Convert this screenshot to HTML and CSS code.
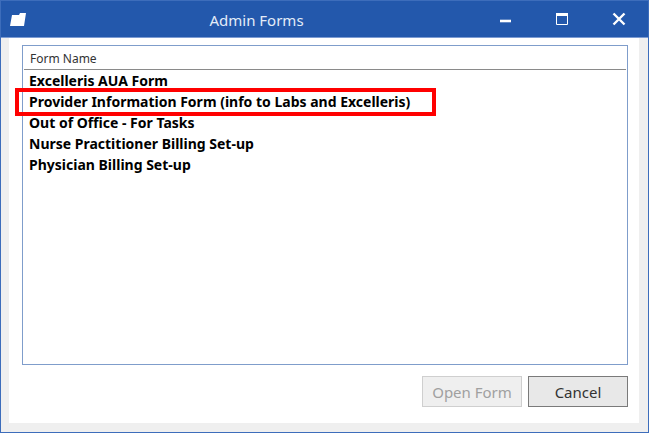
FILE: index.html
```html
<!DOCTYPE html>
<html lang="en">
<head>
  <meta charset="UTF-8" />
  <meta name="viewport" content="width=device-width, initial-scale=1.0" />
  <title>Admin Forms</title>
  <link rel="stylesheet" href="styles.css">
</head>
<body>
  <div class="window">
    <header class="titlebar">
      <svg class="app-icon" viewBox="0 0 18 16" aria-hidden="true">
        <path d="M3 3H10L11 1H17L15 14H1Z"/>
      </svg>
      <h1>Admin Forms</h1>
      <div class="window-controls">
        <button type="button" aria-label="Minimize">
          <svg viewBox="0 0 14 14"><path d="M1 9H12" stroke-width="2.6"/></svg>
        </button>
        <button type="button" aria-label="Maximize">
          <svg viewBox="0 0 14 14"><path d="M1.5 1V12.5H12.5V1" stroke-width="1"/><path d="M1 2.5H13" stroke-width="3"/></svg>
        </button>
        <button type="button" aria-label="Close">
          <svg viewBox="0 0 14 14"><path d="M1.5 1.5L12.5 12.5M12.5 1.5L1.5 12.5" stroke-width="2.4"/></svg>
        </button>
      </div>
    </header>

    <main class="content">
      <div class="form-list">
        <table>
          <thead>
            <tr><th scope="col">Form Name</th></tr>
          </thead>
          <tbody>
            <tr><td>Excelleris AUA Form</td></tr>
            <tr><td><span class="highlighted">Provider Information Form (info to Labs and Excelleris)</span></td></tr>
            <tr><td>Out of Office - For Tasks</td></tr>
            <tr><td>Nurse Practitioner Billing Set-up</td></tr>
            <tr><td>Physician Billing Set-up</td></tr>
          </tbody>
        </table>
      </div>
      <div class="actions">
        <button type="button" class="button" disabled>Open Form</button>
        <button type="button" class="button">Cancel</button>
      </div>
    </main>
  </div>
</body>
</html>
```
FILE: styles.css
```css
:root {
  --blue: #2358ac;
  --frame: #efefef;
  --list-border: #7f9dcb;
  --highlight: #ff0000;
}

* { box-sizing: border-box; margin: 0; padding: 0; }

body {
  background: #fff;
  color: #000;
  font-family: "Noto Sans", "Open Sans", sans-serif;
}

.window {
  display: flex;
  flex-direction: column;
  min-height: 100vh;
  background: var(--frame);
  border: 1px solid #3d6dbb;
}

/* Title bar */
.titlebar {
  display: grid;
  grid-template-columns: 168px 1fr 170px;
  align-items: center;
  height: 37px;
  background: var(--blue);
  border-bottom: 1px solid #7c9bd2;
  color: #fff;
}

.app-icon {
  width: 18px;
  height: 16px;
  margin-left: 8px;
  margin-top: 2px;
  fill: #fff;
}

h1 {
  padding-right: 134px;
  padding-top: 2px;
  font-size: 15px;
  font-weight: 400;
  text-align: center;
  white-space: nowrap;
  color: #e4ecf8;
}

.window-controls {
  display: flex;
  padding-right: 1px;
}

.window-controls button {
  flex: 1;
  height: 36px;
  background: none;
  border: none;
}

.window-controls svg {
  display: block;
  width: 14px;
  height: 14px;
  margin: 0 auto;
  fill: none;
  stroke: #fff;
}

/* Form list */
.content {
  flex: 1;
  display: flex;
  flex-direction: column;
  gap: 11px;
  margin: 0 9px 9px 8px;
  padding: 7px 11px 16px 13px;
  background: #fff;
}

.form-list {
  flex: 1;
  padding: 1px;
  border: 1px solid var(--list-border);
}

table {
  width: 100%;
  border-collapse: collapse;
}

th {
  height: 22px;
  padding: 2px 6px 0;
  border-bottom: 1px solid #8a8a8a;
  font-size: 12px;
  line-height: 16px;
  font-weight: 400;
  text-align: left;
  color: #333;
}

td {
  height: 21px;
  padding: 1px 4px 0 5px;
  font-size: 14px;
  line-height: 20px;
  font-weight: 700;
  white-space: nowrap;
}

.highlighted {
  position: relative;
}

.highlighted::after {
  content: "";
  position: absolute;
  inset: -4px -26px -5px -14px;
  border: 4px solid var(--highlight);
}

/* Buttons */
.actions {
  display: flex;
  justify-content: flex-end;
  gap: 6px;
}

.button {
  width: 100px;
  height: 31px;
  background: #e8e8e8;
  border: 1px solid #7a7a7a;
  color: #333;
  font-family: inherit;
  font-size: 15px;
}

.button:disabled {
  background: #efefef;
  border-color: #cfcfcf;
  color: #a0a0a0;
}
```
